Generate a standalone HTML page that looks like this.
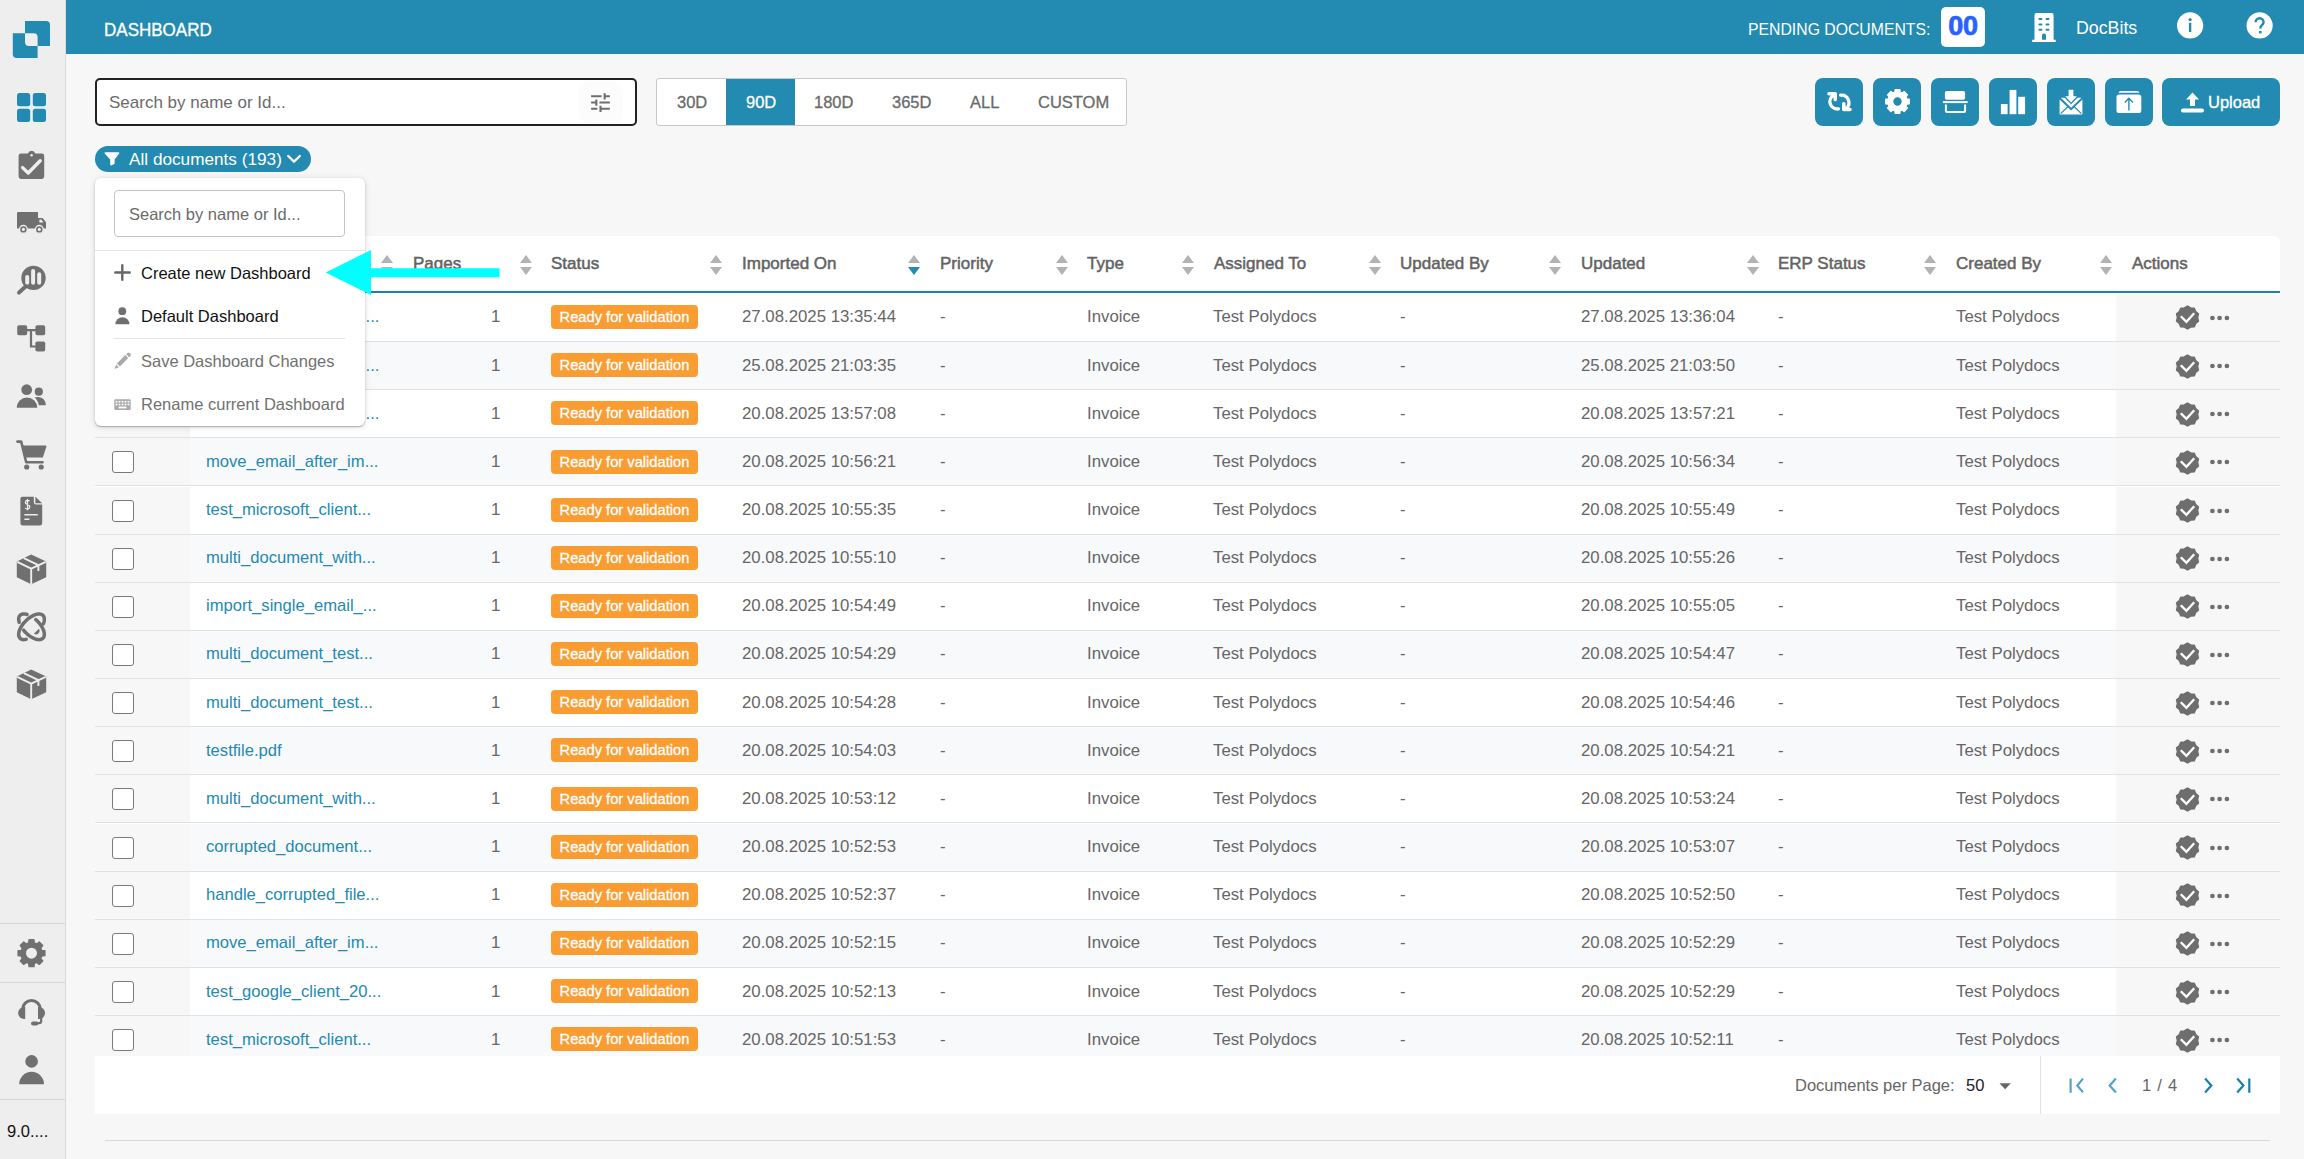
<!DOCTYPE html>
<html><head><meta charset="utf-8">
<style>
*{box-sizing:border-box;margin:0;padding:0}
html,body{width:2304px;height:1159px;overflow:hidden;background:#f7f7f7;font-family:"Liberation Sans",sans-serif;color:#666;position:relative}
.abs{position:absolute}
#side{position:absolute;left:0;top:0;width:66px;height:1159px;background:#eeeeee;border-right:1px solid #dcdcdc}
#side svg{position:absolute;fill:#707070}
#side .hr{position:absolute;left:0;width:65px;height:1px;background:#d6d6d6}
#top{position:absolute;left:66px;top:0;width:2238px;height:54px;background:#238ab1}
.med{-webkit-text-stroke:0.35px currentColor}
.search{position:absolute;left:95px;top:78px;width:542px;height:48px;border:2px solid #222;border-radius:5px;background:#fff}
.ph{position:absolute;font-size:16.5px;color:#6b6b6b;white-space:nowrap}
.seg{position:absolute;left:656px;top:78px;width:471px;height:48px;border:1px solid #c8c8c8;border-radius:3px;background:#fff}
.seg span{position:absolute;top:0;height:46px;line-height:46px;font-size:16.5px;color:#6a6a6a;-webkit-text-stroke:0.3px currentColor}
.btn{position:absolute;top:78px;width:48px;height:48px;background:#238ab1;border-radius:8px}
.btn svg{position:absolute;fill:#fff}
.pill{position:absolute;left:95px;top:146px;width:216px;height:26px;border-radius:13px;background:#238ab1}
#card{position:absolute;left:95px;top:236px;width:2185px;height:878px;background:#fff;border-radius:6px 6px 0 0}
.hdr{position:absolute;top:255.5px;font-size:17px;color:#636363;white-space:nowrap;line-height:16px;-webkit-text-stroke:0.5px #636363}
.sort{position:absolute;top:255px;width:12px;height:21px}
.sort i{position:absolute;left:0;width:0;height:0;border-left:6px solid transparent;border-right:6px solid transparent}
.sort .up{top:0;border-bottom:8px solid #b3b3b3}
.sort .dn{top:12px;border-top:8px solid #b3b3b3}
.row{position:absolute;left:95px;width:2185px;height:48px;background:#fff;border-bottom:1px solid #e2e2e2}
.row.alt{background:#f8f9fb}
.row .stk{position:absolute;top:0;height:47px;background:#f7f7f7}
.row .stk.l{left:0;width:95px}
.row .stk.r{left:2021px;width:164px}
.row .c{position:absolute;top:15.5px;font-size:16.8px;line-height:16px;white-space:nowrap;color:#666}
.row .link{color:#238ab1;font-size:16.6px;margin-left:-1px}
.cb{position:absolute;left:17px;top:13px;width:22px;height:22px;border:1.6px solid #7a7a7a;border-radius:3px;background:#fff}
.badge{position:absolute;left:456px;top:11.2px;width:147px;height:24px;border-radius:4px;background:#f99d32;color:#fff;font-size:14.7px;line-height:24.2px;text-align:center;white-space:nowrap;-webkit-text-stroke:0.3px #fff}
.vbadge{position:absolute;left:2080px;top:11.5px;width:25px;height:25px;fill:#6e6e6e}
.dots{position:absolute;left:2113px;top:12px;width:24px;height:24px;fill:#6e6e6e}
#pager{position:absolute;left:95px;top:1056px;width:2185px;height:58px;background:#fff}
#dd{position:absolute;left:95px;top:178px;width:270px;height:248px;background:#fff;border-radius:6px;box-shadow:0 1px 1.5px rgba(0,0,0,.28),0 1px 7px rgba(0,0,0,.13)}
.mi{position:absolute;left:46px;font-size:16.5px;white-space:nowrap;line-height:16px}
</style></head><body>
<svg width="0" height="0" style="position:absolute">
<defs>
<symbol id="verified" viewBox="0 0 25 25"><path d="M12.50 1.20 L15.56 3.08 L19.14 3.36 L20.51 6.68 L23.25 9.01 L22.40 12.50 L23.25 15.99 L20.51 18.32 L19.14 21.64 L15.56 21.92 L12.50 23.80 L9.44 21.92 L5.86 21.64 L4.49 18.32 L1.75 15.99 L2.60 12.50 L1.75 9.01 L4.49 6.68 L5.86 3.36 L9.44 3.08Z" stroke="#6e6e6e" stroke-width="1.8" stroke-linejoin="round"/><path d="M5.8 11.2L11.4 16.8L19.2 8.2" fill="none" stroke="#fff" stroke-width="2.3"/></symbol>
<symbol id="dots" viewBox="0 0 24 24"><circle cx="4.4" cy="12" r="2.35"/><circle cx="11.6" cy="12" r="2.35"/><circle cx="18.9" cy="12" r="2.35"/></symbol>
</defs></svg>

<div id="side">
  <svg style="left:12px;top:21px;width:38px;height:38px" viewBox="0 0 38 38"><g fill="#238ab1">
    <path d="M13 0H34A4 4 0 0 1 38 4V25H25.6V16.2A4 4 0 0 0 21.6 12.2H13Z"/>
    <path d="M0.8 12.2H13V21A4 4 0 0 0 17 25H25.6V37H4.8A4 4 0 0 1 0.8 33Z"/>
  </g></svg>
  <svg style="left:17px;top:93px;width:29px;height:29px" viewBox="0 0 29 29"><g fill="#238ab1"><rect x="0" y="0" width="13.2" height="13.2" rx="2.5"/><rect x="15.8" y="0" width="13.2" height="13.2" rx="2.5"/><rect x="0" y="15.8" width="13.2" height="13.2" rx="2.5"/><rect x="15.8" y="15.8" width="13.2" height="13.2" rx="2.5"/></g></svg>
  <!-- clipboard check -->
  <svg style="left:18px;top:150px;width:27px;height:30px" viewBox="0 0 27 30">
    <path fill-rule="evenodd" d="M3 3.4H9.9A3.9 3.9 0 0 1 17.3 3.4H23.8A2.4 2.4 0 0 1 26.2 5.8V26.6A2.4 2.4 0 0 1 23.8 29H3A2.4 2.4 0 0 1 0.6 26.6V5.8A2.4 2.4 0 0 1 3 3.4Z M13.6 4A1.3 1.3 0 1 0 13.6 6.6A1.3 1.3 0 1 0 13.6 4Z"/>
    <path d="M4.6 17.6L10.2 23L22.2 10.8" fill="none" stroke="#eeeeee" stroke-width="3.4" stroke-linecap="round" stroke-linejoin="round"/>
  </svg>
  <!-- truck -->
  <svg style="left:16px;top:211px;width:31px;height:24px" viewBox="0 0 31 24">
    <path d="M2.2 1H22V17.5H1V2.2A1.2 1.2 0 0 1 2.2 1Z"/>
    <path fill-rule="evenodd" d="M22 7H26.6L30 11.2V17.5H22Z M23.4 8.6V11.6H27.6L25.2 8.6Z"/>
    <circle cx="7.4" cy="18.4" r="3.9" stroke="#eeeeee" stroke-width="1.4"/><circle cx="7.4" cy="18.4" r="1.6" fill="#eeeeee"/>
    <circle cx="23.3" cy="18.4" r="3.9" stroke="#eeeeee" stroke-width="1.4"/><circle cx="23.3" cy="18.4" r="1.6" fill="#eeeeee"/>
  </svg>
  <!-- magnifier chart -->
  <svg style="left:16px;top:264px;width:32px;height:32px" viewBox="0 0 32 32">
    <path fill-rule="evenodd" d="M17.5 1.7A12.2 12.2 0 1 1 17.5 26.1A12.2 12.2 0 1 1 17.5 1.7Z M11.2 11A2 2 0 0 0 9.2 13V18.8A2 2 0 0 0 13.2 18.8V13A2 2 0 0 0 11.2 11Z M17.1 5A2 2 0 0 0 15.1 7V18.8A2 2 0 0 0 19.1 18.8V7A2 2 0 0 0 17.1 5Z M23.2 8.2A2 2 0 0 0 21.2 10.2V18.8A2 2 0 0 0 25.2 18.8V10.2A2 2 0 0 0 23.2 8.2Z"/>
    <path d="M3 28.6L9.8 22.3" stroke="#707070" stroke-width="4" stroke-linecap="round"/>
  </svg>
  <!-- hierarchy -->
  <svg style="left:17px;top:325px;width:29px;height:27px" viewBox="0 0 29 27">
    <rect x="0.2" y="0.2" width="10" height="10" rx="1.8"/><rect x="18.4" y="0.2" width="9.8" height="10" rx="1.8"/><rect x="18.4" y="16.5" width="9.8" height="10" rx="1.8"/>
    <path d="M10 5.2H19M14 5.2V21.5H19" fill="none" stroke="#707070" stroke-width="2.2"/>
  </svg>
  <!-- users -->
  <svg style="left:16px;top:383px;width:31px;height:26px" viewBox="0 0 31 26">
    <circle cx="10.7" cy="6.7" r="5.4"/>
    <path d="M0.7 24.8A10.3 10.3 0 0 1 21.3 24.8Z"/>
    <circle cx="22.8" cy="8.7" r="4.1"/>
    <path d="M18.5 14.6A8 8 0 0 1 29.8 22.2H22.8A12 12 0 0 0 18.5 14.6Z"/>
  </svg>
  <!-- cart -->
  <svg style="left:16px;top:440px;width:31px;height:30px" viewBox="0 0 31 30">
    <path d="M1.4 1.6H5.2L10.2 22.3H26.5" fill="none" stroke="#707070" stroke-width="2.6" stroke-linecap="round" stroke-linejoin="round"/>
    <path d="M6.8 5.6H29.6A0.9 0.9 0 0 1 30.4 6.8L26.8 17.4H9.4Z"/>
    <circle cx="10.7" cy="27" r="2.6"/><circle cx="25.2" cy="27" r="2.6"/>
  </svg>
  <!-- invoice -->
  <svg style="left:20px;top:496px;width:23px;height:30px" viewBox="0 0 23 30">
    <path fill-rule="evenodd" d="M2.4 0.7H13.8V6.2A2.4 2.4 0 0 0 16.2 8.6H22.2V27.2A2.4 2.4 0 0 1 19.8 29.6H2.8A2.4 2.4 0 0 1 0.4 27.2V2.7A2 2 0 0 1 2.4 0.7Z"/>
    <path d="M15.4 0.7L22.2 7.3H15.4Z"/>
    <path d="M4.4 18.8H17.8M4.4 23.2H9.4" stroke="#eeeeee" stroke-width="1.5"/>
    <path d="M9.6 5.1C8.6 4.1 5.4 4 5.4 6.4C5.4 8.7 9.8 8 9.8 10.8C9.8 13.2 6.6 13.2 5.1 12.2M7.5 3V14.3" fill="none" stroke="#eeeeee" stroke-width="1.3"/>
  </svg>
  <!-- box -->
  <svg style="left:16px;top:554px;width:31px;height:31px" viewBox="0 0 31 31">
    <path d="M15.2 0.6L30.2 7.6V23.2L15.2 30.2L0.8 23.2V7.6Z"/>
    <path d="M1.2 7.8L15.2 14.6V30M15.2 14.6L29.8 7.8M7.8 4.2L22.4 11.2V17" fill="none" stroke="#eeeeee" stroke-width="1.9"/>
  </svg>
  <!-- orbit -->
  <svg style="left:16px;top:611px;width:31px;height:31px" viewBox="0 0 31 31">
    <path d="M19.77 8.57 L20.81 9.52 L21.80 10.51 L22.75 11.55 L23.64 12.61 L24.47 13.70 L25.23 14.81 L25.92 15.92 L26.53 17.03 L27.06 18.14 L27.50 19.22 L27.85 20.28 L28.11 21.31 L28.27 22.29 L28.34 23.23 L28.31 24.11 L28.18 24.92 L27.96 25.67 L27.65 26.34 L27.24 26.94 L26.75 27.45 L26.17 27.87 L25.51 28.21 L24.77 28.45 L23.97 28.59 L23.10 28.64 L22.17 28.59 L21.20 28.45 L20.18 28.21 L19.13 27.87 L18.05 27.45 L16.95 26.94 L15.84 26.34 L14.72 25.67 L13.62 24.92 L12.52 24.10 L11.45 23.22 L10.41 22.29 L9.41 21.30 L8.45 20.28 L7.55 19.22 M3.17 11.39 L3.05 10.94 L2.94 10.50 L2.85 10.06 L2.77 9.64 L2.72 9.22 L2.68 8.81 L2.66 8.41 L2.66 8.02 L2.68 7.65 L2.72 7.28 L2.77 6.93 L2.84 6.58 L2.93 6.26 L3.04 5.94 L3.16 5.64 L3.30 5.35 L3.46 5.08 L3.63 4.82 L3.83 4.58 L4.04 4.35 L4.26 4.14 L4.50 3.95 L4.76 3.77 L5.03 3.61 L5.31 3.47 L5.61 3.34 L5.93 3.24 L6.26 3.15 L6.60 3.07 L6.95 3.02 L7.31 2.98 L7.69 2.96 L8.08 2.96 L8.48 2.98 L8.88 3.02 L9.30 3.07 L9.73 3.14 L10.16 3.23 L10.60 3.34 L11.05 3.46 M10.22 28.36 L9.33 28.53 L8.47 28.62 L7.66 28.64 L6.89 28.57 L6.17 28.43 L5.52 28.22 L4.92 27.93 L4.39 27.56 L3.92 27.12 L3.52 26.62 L3.20 26.05 L2.95 25.42 L2.78 24.73 L2.68 23.98 L2.66 23.19 L2.72 22.35 L2.86 21.47 L3.07 20.56 L3.36 19.62 L3.72 18.65 L4.16 17.67 L4.66 16.68 L5.23 15.68 L5.86 14.68 L6.54 13.69 L7.29 12.71 L8.08 11.75 L8.92 10.82 L9.79 9.91 L10.70 9.04 L11.65 8.21 L12.61 7.43 L13.59 6.70 L14.58 6.02 L15.58 5.41 L16.58 4.85 L17.57 4.36 L18.55 3.94 L19.51 3.60 L20.45 3.32 L21.35 3.13 L22.22 3.00 L23.05 2.96 L23.84 3.00 L24.57 3.11 L25.25 3.30 L25.87 3.56 L26.43 3.90 L26.92 4.31 L27.34 4.79 L27.69 5.34 L27.97 5.95 L28.17 6.62 L28.29 7.34 L28.34 8.12 L28.31 8.94 L28.20 9.81 L28.01 10.71 L27.75 11.64 L27.42 12.60" fill="none" stroke="#707070" stroke-width="3.5" stroke-linecap="round"/>
    <path d="M17.9 22.7L22.9 17.7A3.6 3.6 0 0 1 17.9 22.7Z"/>
  </svg>
  <!-- box 2 -->
  <svg style="left:16px;top:669px;width:31px;height:31px" viewBox="0 0 31 31">
    <path d="M15.2 0.6L30.2 7.6V23.2L15.2 30.2L0.8 23.2V7.6Z"/>
    <path d="M1.2 7.8L15.2 14.6V30M15.2 14.6L29.8 7.8M7.8 4.2L22.4 11.2V17" fill="none" stroke="#eeeeee" stroke-width="1.9"/>
  </svg>
  <div class="hr" style="top:923px"></div>
  <!-- gear -->
  <svg style="left:16px;top:938px;width:31px;height:31px" viewBox="0 0 31 31">
    <path fill-rule="evenodd" stroke="#707070" stroke-width="1.4" stroke-linejoin="round" d="M12.70 4.98 L13.06 1.82 L17.94 1.82 L18.30 4.98 L20.75 5.99 L23.23 4.01 L26.69 7.47 L24.71 9.95 L25.72 12.40 L28.88 12.76 L28.88 17.64 L25.72 18.00 L24.71 20.45 L26.69 22.93 L23.23 26.39 L20.75 24.41 L18.30 25.42 L17.94 28.58 L13.06 28.58 L12.70 25.42 L10.25 24.41 L7.77 26.39 L4.31 22.93 L6.29 20.45 L5.28 18.00 L2.12 17.64 L2.12 12.76 L5.28 12.40 L6.29 9.95 L4.31 7.47 L7.77 4.01 L10.25 5.99Z M9.30 15.20 a6.20 6.20 0 1 0 12.40 0 a6.20 6.20 0 1 0 -12.40 0Z"/>
  </svg>
  <div class="hr" style="top:982px"></div>
  <!-- headset -->
  <svg style="left:17px;top:997px;width:29px;height:30px" viewBox="0 0 29 30">
    <path d="M5.6 12.4A8.9 8.9 0 0 1 23.4 12.4" fill="none" stroke="#707070" stroke-width="3"/>
    <path d="M8.2 9.9V22H7.2A6 6 0 0 1 7.2 9.9Z"/>
    <path d="M21 9.9V22H22A6 6 0 0 0 22 9.9Z"/>
    <path d="M24.2 21V24A2.2 2.2 0 0 1 22 26.2H16" fill="none" stroke="#707070" stroke-width="2.2"/>
    <rect x="14" y="24.5" width="7.4" height="4" rx="2"/>
  </svg>
  <!-- person -->
  <svg style="left:19px;top:1055px;width:26px;height:30px" viewBox="0 0 26 30">
    <circle cx="12.6" cy="6.4" r="6.3"/>
    <path d="M0.2 29.2A12.4 12.4 0 0 1 25 29.2Z"/>
  </svg>
  <div class="hr" style="top:1099px"></div>
  <div class="abs" style="left:7px;top:1122px;font-size:16.5px;color:#111;line-height:18px">9.0....</div>
</div>

<div id="top">
  <div class="abs med" style="left:38px;top:20px;font-size:18.6px;color:#fff;line-height:20px;transform:scaleX(.915);transform-origin:0 0">DASHBOARD</div>
  <div class="abs" style="left:1682px;top:20.3px;font-size:16.2px;color:#fff;line-height:18px;transform:scaleX(.975);transform-origin:0 0">PENDING DOCUMENTS:</div>
  <div class="abs" style="left:1875px;top:7px;width:44px;height:40px;background:#fff;border-radius:5px;color:#2962ff;font-weight:bold;font-size:27px;line-height:38px;text-align:center;letter-spacing:-0.3px;-webkit-text-stroke:0.7px #2962ff">00</div>
  <div class="abs" style="left:2010px;top:19px;font-size:17.8px;color:#fff;line-height:18px">DocBits</div>
  <svg class="abs" style="left:1966px;top:12px" width="24" height="31" viewBox="0 0 24 31">
    <path fill="#fff" fill-rule="evenodd" d="M4.5 1H19.6A2 2 0 0 1 21.6 3V27.7H23.7V30H0.2V27.7H2.5V3A2 2 0 0 1 4.5 1Z M7.4 6A1 1 0 0 0 7.4 8H9.4A1 1 0 0 0 9.4 6Z M14.5 6A1 1 0 0 0 14.5 8H16.5A1 1 0 0 0 16.5 6Z M7.4 11.4A1 1 0 0 0 7.4 13.4H9.4A1 1 0 0 0 9.4 11.4Z M14.5 11.4A1 1 0 0 0 14.5 13.4H16.5A1 1 0 0 0 16.5 11.4Z M7.4 16.7A1 1 0 0 0 7.4 18.7H9.4A1 1 0 0 0 9.4 16.7Z M14.5 16.7A1 1 0 0 0 14.5 18.7H16.5A1 1 0 0 0 16.5 16.7Z M10 27.7H14V23.6A2 2 0 0 0 10 23.6Z"/>
  </svg>
  <svg class="abs" style="left:2111px;top:12px" width="27" height="27" viewBox="0 0 27 27">
    <circle cx="13.1" cy="13.4" r="13.1" fill="#fff"/>
    <circle cx="13.1" cy="7.6" r="1.6" fill="#238ab1"/>
    <rect x="11.9" y="10.8" width="2.4" height="9.2" fill="#238ab1"/>
  </svg>
  <svg class="abs" style="left:2180px;top:12px" width="27" height="27" viewBox="0 0 27 27">
    <circle cx="13.6" cy="13.4" r="13.1" fill="#fff"/>
    <path d="M9.6 10.2A4 4 0 0 1 17.6 10.2C17.6 13 14.4 13.2 14.4 15.8V16.6" fill="none" stroke="#238ab1" stroke-width="2.4"/>
    <rect x="13" y="19" width="2.6" height="2.4" fill="#238ab1"/>
  </svg>
</div>

<div class="search"><span class="ph" style="left:12px;top:12.5px;font-size:17px">Search by name or Id...</span>
  <div class="abs" style="left:482px;top:1px;width:44px;height:43px;border-radius:12px;background:#fcfcfc"></div>
  <svg class="abs" style="left:491px;top:10px" width="25" height="25" viewBox="0 0 24 24"><path fill="#6e6e6e" d="M3 17v2h6v-2H3zM3 5v2h10V5H3zm10 16v-2h8v-2h-8v-2h-2v6h2zM7 9v2H3v2h4v2h2V9H7zm14 4v-2H11v2h10zm-6-4h2V7h4V5h-4V3h-2v6z"/></svg>
</div>
<div class="seg">
  <span style="left:20px">30D</span>
  <div class="abs" style="left:69px;top:0;width:69px;height:46px;background:#238ab1"></div>
  <span style="left:89px;color:#fff">90D</span>
  <span style="left:157px">180D</span>
  <span style="left:235px">365D</span>
  <span style="left:313px">ALL</span>
  <span style="left:381px">CUSTOM</span>
</div>

<div class="btn" style="left:1815px"><svg style="left:10px;top:12px" width="28" height="24" viewBox="1825 90 28 24">
  <path d="M1838.4 108.9A7.4 7.4 0 0 1 1833.4 95.3M1840.6 95.2A7.5 7.5 0 0 1 1846 108.6" fill="none" stroke="#fff" stroke-width="3.3" stroke-linecap="round"/>
  <path d="M1829 93.7H1835.2V99.6M1843.8 103.7V109.5H1850" fill="none" stroke="#fff" stroke-width="3.6" stroke-linecap="round" stroke-linejoin="round"/>
  <path d="M1831 93.7H1835.2V97.6Z M1843.8 105.7V109.5H1848Z" fill="#fff"/>
</svg></div>
<div class="btn" style="left:1873px"><svg style="left:10.9px;top:10.4px" width="27" height="27" viewBox="0 0 31 31"><path fill="#fff" fill-rule="evenodd" stroke="#fff" stroke-width="1.6" stroke-linejoin="round" d="M12.43 4.94 L12.83 2.06 L18.17 2.06 L18.57 4.94 L20.80 5.86 L23.11 4.11 L26.89 7.89 L25.14 10.20 L26.06 12.43 L28.94 12.83 L28.94 18.17 L26.06 18.57 L25.14 20.80 L26.89 23.11 L23.11 26.89 L20.80 25.14 L18.57 26.06 L18.17 28.94 L12.83 28.94 L12.43 26.06 L10.20 25.14 L7.89 26.89 L4.11 23.11 L5.86 20.80 L4.94 18.57 L2.06 18.17 L2.06 12.83 L4.94 12.43 L5.86 10.20 L4.11 7.89 L7.89 4.11 L10.20 5.86Z M9.90 15.50 a5.60 5.60 0 1 0 11.20 0 a5.60 5.60 0 1 0 -11.20 0Z"/></svg></div>
<div class="btn" style="left:1931px"><svg style="left:11px;top:12px" width="26" height="24" viewBox="0 0 26 24">
  <rect x="2.9" y="0.9" width="20.2" height="8.8" rx="1.8" fill="#fff"/>
  <rect x="0.9" y="11.1" width="24.7" height="2" fill="#fff"/>
  <path d="M3.9 14.6V21.1A1 1 0 0 0 4.9 22.1H22.1A1 1 0 0 0 23.1 21.1V14.6" fill="none" stroke="#fff" stroke-width="2"/>
</svg></div>
<div class="btn" style="left:1989px"><svg style="left:11px;top:11px" width="26" height="26" viewBox="0 0 26 26">
  <rect x="0.9" y="15" width="6.7" height="10.2" fill="#fff"/>
  <rect x="9.6" y="0.9" width="6.8" height="24.3" fill="#fff"/>
  <rect x="18.2" y="7.8" width="6.9" height="17.4" fill="#fff"/>
</svg></div>
<div class="btn" style="left:2047px"><svg style="left:12px;top:11px" width="25" height="27" viewBox="0 0 25 27">
  <path fill="#fff" d="M0.6 10.4L12.1 21.4L23.4 10.4V25.4H0.6Z"/>
  <path d="M0.6 9.6L12.1 20.4L23.4 9.6" fill="none" stroke="#fff" stroke-width="0"/>
  <path d="M1.6 24.6L9.4 17.2M22.4 24.6L14.8 17.2" stroke="#238ab1" stroke-width="1.2"/>
  <path fill="#fff" d="M1.8 8.8H5.6L12.1 15.2L18.6 8.8H22.4L12.1 18.8Z"/>
  <path fill="#fff" d="M9.6 0.7H14.4V7.2H18L12.1 13.6L6.2 7.2H9.6Z"/>
</svg></div>
<div class="btn" style="left:2105px"><svg style="left:11px;top:13px" width="26" height="23" viewBox="0 0 26 23">
  <path fill="#fff" d="M4.7 0H21.2A3 3 0 0 1 23.5 1.8H2.4A3 3 0 0 1 4.7 0Z"/>
  <path fill="#fff" fill-rule="evenodd" d="M3.2 3.4H22.6A2.7 2.7 0 0 1 25.3 6.1V19.4A2.7 2.7 0 0 1 22.6 22.1H3.2A2.7 2.7 0 0 1 0.5 19.4V6.1A2.7 2.7 0 0 1 3.2 3.4Z"/>
  <path d="M12.9 19V7.4M9.3 10.9L12.9 7.3L16.5 10.9" fill="none" stroke="#238ab1" stroke-width="1.4" stroke-linecap="round"/>
</svg></div>
<div class="btn" style="left:2162px;width:118px">
  <svg style="left:18px;top:14px" width="25" height="22" viewBox="0 0 25 22">
    <path fill="#fff" d="M12.5 0.6L19 7.6H15V14H10V7.6H6Z"/>
    <rect x="1" y="16.6" width="23" height="3.8" rx="1.9" fill="#fff"/>
  </svg>
  <span class="abs med" style="left:46px;top:15px;color:#fff;font-size:16.5px;line-height:18px">Upload</span></div>

<div class="pill"><span class="abs" style="left:34px;top:4.5px;color:#fff;font-size:17.2px;line-height:17px">All documents (193)</span>
  <svg class="abs" style="left:9px;top:6px" width="16" height="14" viewBox="0 0 16 14"><path fill="#fff" d="M1.2 0.3H14.6A0.8 0.8 0 0 1 15.2 1.6L10.6 7.6V11.8L7.8 13.2A1 1 0 0 1 6.2 12.4V7.6L0.6 1.6A0.8 0.8 0 0 1 1.2 0.3Z"/></svg>
  <svg class="abs" style="left:191px;top:8px" width="16" height="10" viewBox="0 0 16 10"><path d="M2.2 2L8 7.6L13.8 2" fill="none" stroke="#fff" stroke-width="2.3" stroke-linecap="round" stroke-linejoin="round"/></svg>
</div>

<div id="card"></div>
<span class="hdr med" style="left:413px">Pages</span>
<span class="hdr med" style="left:551px">Status</span>
<span class="hdr med" style="left:742px">Imported On</span>
<span class="hdr med" style="left:940px">Priority</span>
<span class="hdr med" style="left:1087px">Type</span>
<span class="hdr med" style="left:1214px">Assigned To</span>
<span class="hdr med" style="left:1400px">Updated By</span>
<span class="hdr med" style="left:1581px">Updated</span>
<span class="hdr med" style="left:1778px">ERP Status</span>
<span class="hdr med" style="left:1956px">Created By</span>
<span class="hdr med" style="left:2132px">Actions</span>
<span class="sort" style="left:381px"><i class="up"></i><i class="dn"></i></span>
<span class="sort" style="left:520px"><i class="up"></i><i class="dn"></i></span>
<span class="sort" style="left:710px"><i class="up"></i><i class="dn"></i></span>
<span class="sort" style="left:908px"><i class="up"></i><i class="dn" style="border-top-color:#238ab1"></i></span>
<span class="sort" style="left:1056px"><i class="up"></i><i class="dn"></i></span>
<span class="sort" style="left:1182px"><i class="up"></i><i class="dn"></i></span>
<span class="sort" style="left:1369px"><i class="up"></i><i class="dn"></i></span>
<span class="sort" style="left:1549px"><i class="up"></i><i class="dn"></i></span>
<span class="sort" style="left:1747px"><i class="up"></i><i class="dn"></i></span>
<span class="sort" style="left:1924px"><i class="up"></i><i class="dn"></i></span>
<span class="sort" style="left:2100px"><i class="up"></i><i class="dn"></i></span>
<div class="abs" style="left:95px;top:291px;width:2185px;height:2px;background:#1f82aa"></div>

<div class="row" style="top:293.9px">
<div class="stk l"></div><div class="stk r"></div>
<i class="cb"></i>
<span class="c link" style="left:112px">handle_corrupted_file...</span>
<span class="c" style="left:396px">1</span>
<span class="badge">Ready for validation</span>
<span class="c" style="left:647px">27.08.2025 13:35:44</span>
<span class="c" style="left:845px">-</span>
<span class="c" style="left:992px">Invoice</span>
<span class="c" style="left:1118px">Test Polydocs</span>
<span class="c" style="left:1305px">-</span>
<span class="c" style="left:1486px">27.08.2025 13:36:04</span>
<span class="c" style="left:1683px">-</span>
<span class="c" style="left:1861px">Test Polydocs</span>
<svg class="vbadge" viewBox="0 0 24 24"><use href="#verified"/></svg>
<svg class="dots" viewBox="0 0 24 24"><use href="#dots"/></svg>
</div>
<div class="row alt" style="top:342.05px">
<div class="stk l"></div><div class="stk r"></div>
<i class="cb"></i>
<span class="c link" style="left:112px">handle_corrupted_file...</span>
<span class="c" style="left:396px">1</span>
<span class="badge">Ready for validation</span>
<span class="c" style="left:647px">25.08.2025 21:03:35</span>
<span class="c" style="left:845px">-</span>
<span class="c" style="left:992px">Invoice</span>
<span class="c" style="left:1118px">Test Polydocs</span>
<span class="c" style="left:1305px">-</span>
<span class="c" style="left:1486px">25.08.2025 21:03:50</span>
<span class="c" style="left:1683px">-</span>
<span class="c" style="left:1861px">Test Polydocs</span>
<svg class="vbadge" viewBox="0 0 24 24"><use href="#verified"/></svg>
<svg class="dots" viewBox="0 0 24 24"><use href="#dots"/></svg>
</div>
<div class="row" style="top:390.2px">
<div class="stk l"></div><div class="stk r"></div>
<i class="cb"></i>
<span class="c link" style="left:112px">handle_corrupted_file...</span>
<span class="c" style="left:396px">1</span>
<span class="badge">Ready for validation</span>
<span class="c" style="left:647px">20.08.2025 13:57:08</span>
<span class="c" style="left:845px">-</span>
<span class="c" style="left:992px">Invoice</span>
<span class="c" style="left:1118px">Test Polydocs</span>
<span class="c" style="left:1305px">-</span>
<span class="c" style="left:1486px">20.08.2025 13:57:21</span>
<span class="c" style="left:1683px">-</span>
<span class="c" style="left:1861px">Test Polydocs</span>
<svg class="vbadge" viewBox="0 0 24 24"><use href="#verified"/></svg>
<svg class="dots" viewBox="0 0 24 24"><use href="#dots"/></svg>
</div>
<div class="row alt" style="top:438.35px">
<div class="stk l"></div><div class="stk r"></div>
<i class="cb"></i>
<span class="c link" style="left:112px">move_email_after_im...</span>
<span class="c" style="left:396px">1</span>
<span class="badge">Ready for validation</span>
<span class="c" style="left:647px">20.08.2025 10:56:21</span>
<span class="c" style="left:845px">-</span>
<span class="c" style="left:992px">Invoice</span>
<span class="c" style="left:1118px">Test Polydocs</span>
<span class="c" style="left:1305px">-</span>
<span class="c" style="left:1486px">20.08.2025 10:56:34</span>
<span class="c" style="left:1683px">-</span>
<span class="c" style="left:1861px">Test Polydocs</span>
<svg class="vbadge" viewBox="0 0 24 24"><use href="#verified"/></svg>
<svg class="dots" viewBox="0 0 24 24"><use href="#dots"/></svg>
</div>
<div class="row" style="top:486.5px">
<div class="stk l"></div><div class="stk r"></div>
<i class="cb"></i>
<span class="c link" style="left:112px">test_microsoft_client...</span>
<span class="c" style="left:396px">1</span>
<span class="badge">Ready for validation</span>
<span class="c" style="left:647px">20.08.2025 10:55:35</span>
<span class="c" style="left:845px">-</span>
<span class="c" style="left:992px">Invoice</span>
<span class="c" style="left:1118px">Test Polydocs</span>
<span class="c" style="left:1305px">-</span>
<span class="c" style="left:1486px">20.08.2025 10:55:49</span>
<span class="c" style="left:1683px">-</span>
<span class="c" style="left:1861px">Test Polydocs</span>
<svg class="vbadge" viewBox="0 0 24 24"><use href="#verified"/></svg>
<svg class="dots" viewBox="0 0 24 24"><use href="#dots"/></svg>
</div>
<div class="row alt" style="top:534.65px">
<div class="stk l"></div><div class="stk r"></div>
<i class="cb"></i>
<span class="c link" style="left:112px">multi_document_with...</span>
<span class="c" style="left:396px">1</span>
<span class="badge">Ready for validation</span>
<span class="c" style="left:647px">20.08.2025 10:55:10</span>
<span class="c" style="left:845px">-</span>
<span class="c" style="left:992px">Invoice</span>
<span class="c" style="left:1118px">Test Polydocs</span>
<span class="c" style="left:1305px">-</span>
<span class="c" style="left:1486px">20.08.2025 10:55:26</span>
<span class="c" style="left:1683px">-</span>
<span class="c" style="left:1861px">Test Polydocs</span>
<svg class="vbadge" viewBox="0 0 24 24"><use href="#verified"/></svg>
<svg class="dots" viewBox="0 0 24 24"><use href="#dots"/></svg>
</div>
<div class="row" style="top:582.8px">
<div class="stk l"></div><div class="stk r"></div>
<i class="cb"></i>
<span class="c link" style="left:112px">import_single_email_...</span>
<span class="c" style="left:396px">1</span>
<span class="badge">Ready for validation</span>
<span class="c" style="left:647px">20.08.2025 10:54:49</span>
<span class="c" style="left:845px">-</span>
<span class="c" style="left:992px">Invoice</span>
<span class="c" style="left:1118px">Test Polydocs</span>
<span class="c" style="left:1305px">-</span>
<span class="c" style="left:1486px">20.08.2025 10:55:05</span>
<span class="c" style="left:1683px">-</span>
<span class="c" style="left:1861px">Test Polydocs</span>
<svg class="vbadge" viewBox="0 0 24 24"><use href="#verified"/></svg>
<svg class="dots" viewBox="0 0 24 24"><use href="#dots"/></svg>
</div>
<div class="row alt" style="top:630.95px">
<div class="stk l"></div><div class="stk r"></div>
<i class="cb"></i>
<span class="c link" style="left:112px">multi_document_test...</span>
<span class="c" style="left:396px">1</span>
<span class="badge">Ready for validation</span>
<span class="c" style="left:647px">20.08.2025 10:54:29</span>
<span class="c" style="left:845px">-</span>
<span class="c" style="left:992px">Invoice</span>
<span class="c" style="left:1118px">Test Polydocs</span>
<span class="c" style="left:1305px">-</span>
<span class="c" style="left:1486px">20.08.2025 10:54:47</span>
<span class="c" style="left:1683px">-</span>
<span class="c" style="left:1861px">Test Polydocs</span>
<svg class="vbadge" viewBox="0 0 24 24"><use href="#verified"/></svg>
<svg class="dots" viewBox="0 0 24 24"><use href="#dots"/></svg>
</div>
<div class="row" style="top:679.1px">
<div class="stk l"></div><div class="stk r"></div>
<i class="cb"></i>
<span class="c link" style="left:112px">multi_document_test...</span>
<span class="c" style="left:396px">1</span>
<span class="badge">Ready for validation</span>
<span class="c" style="left:647px">20.08.2025 10:54:28</span>
<span class="c" style="left:845px">-</span>
<span class="c" style="left:992px">Invoice</span>
<span class="c" style="left:1118px">Test Polydocs</span>
<span class="c" style="left:1305px">-</span>
<span class="c" style="left:1486px">20.08.2025 10:54:46</span>
<span class="c" style="left:1683px">-</span>
<span class="c" style="left:1861px">Test Polydocs</span>
<svg class="vbadge" viewBox="0 0 24 24"><use href="#verified"/></svg>
<svg class="dots" viewBox="0 0 24 24"><use href="#dots"/></svg>
</div>
<div class="row alt" style="top:727.25px">
<div class="stk l"></div><div class="stk r"></div>
<i class="cb"></i>
<span class="c link" style="left:112px">testfile.pdf</span>
<span class="c" style="left:396px">1</span>
<span class="badge">Ready for validation</span>
<span class="c" style="left:647px">20.08.2025 10:54:03</span>
<span class="c" style="left:845px">-</span>
<span class="c" style="left:992px">Invoice</span>
<span class="c" style="left:1118px">Test Polydocs</span>
<span class="c" style="left:1305px">-</span>
<span class="c" style="left:1486px">20.08.2025 10:54:21</span>
<span class="c" style="left:1683px">-</span>
<span class="c" style="left:1861px">Test Polydocs</span>
<svg class="vbadge" viewBox="0 0 24 24"><use href="#verified"/></svg>
<svg class="dots" viewBox="0 0 24 24"><use href="#dots"/></svg>
</div>
<div class="row" style="top:775.4px">
<div class="stk l"></div><div class="stk r"></div>
<i class="cb"></i>
<span class="c link" style="left:112px">multi_document_with...</span>
<span class="c" style="left:396px">1</span>
<span class="badge">Ready for validation</span>
<span class="c" style="left:647px">20.08.2025 10:53:12</span>
<span class="c" style="left:845px">-</span>
<span class="c" style="left:992px">Invoice</span>
<span class="c" style="left:1118px">Test Polydocs</span>
<span class="c" style="left:1305px">-</span>
<span class="c" style="left:1486px">20.08.2025 10:53:24</span>
<span class="c" style="left:1683px">-</span>
<span class="c" style="left:1861px">Test Polydocs</span>
<svg class="vbadge" viewBox="0 0 24 24"><use href="#verified"/></svg>
<svg class="dots" viewBox="0 0 24 24"><use href="#dots"/></svg>
</div>
<div class="row alt" style="top:823.55px">
<div class="stk l"></div><div class="stk r"></div>
<i class="cb"></i>
<span class="c link" style="left:112px">corrupted_document...</span>
<span class="c" style="left:396px">1</span>
<span class="badge">Ready for validation</span>
<span class="c" style="left:647px">20.08.2025 10:52:53</span>
<span class="c" style="left:845px">-</span>
<span class="c" style="left:992px">Invoice</span>
<span class="c" style="left:1118px">Test Polydocs</span>
<span class="c" style="left:1305px">-</span>
<span class="c" style="left:1486px">20.08.2025 10:53:07</span>
<span class="c" style="left:1683px">-</span>
<span class="c" style="left:1861px">Test Polydocs</span>
<svg class="vbadge" viewBox="0 0 24 24"><use href="#verified"/></svg>
<svg class="dots" viewBox="0 0 24 24"><use href="#dots"/></svg>
</div>
<div class="row" style="top:871.7px">
<div class="stk l"></div><div class="stk r"></div>
<i class="cb"></i>
<span class="c link" style="left:112px">handle_corrupted_file...</span>
<span class="c" style="left:396px">1</span>
<span class="badge">Ready for validation</span>
<span class="c" style="left:647px">20.08.2025 10:52:37</span>
<span class="c" style="left:845px">-</span>
<span class="c" style="left:992px">Invoice</span>
<span class="c" style="left:1118px">Test Polydocs</span>
<span class="c" style="left:1305px">-</span>
<span class="c" style="left:1486px">20.08.2025 10:52:50</span>
<span class="c" style="left:1683px">-</span>
<span class="c" style="left:1861px">Test Polydocs</span>
<svg class="vbadge" viewBox="0 0 24 24"><use href="#verified"/></svg>
<svg class="dots" viewBox="0 0 24 24"><use href="#dots"/></svg>
</div>
<div class="row alt" style="top:919.85px">
<div class="stk l"></div><div class="stk r"></div>
<i class="cb"></i>
<span class="c link" style="left:112px">move_email_after_im...</span>
<span class="c" style="left:396px">1</span>
<span class="badge">Ready for validation</span>
<span class="c" style="left:647px">20.08.2025 10:52:15</span>
<span class="c" style="left:845px">-</span>
<span class="c" style="left:992px">Invoice</span>
<span class="c" style="left:1118px">Test Polydocs</span>
<span class="c" style="left:1305px">-</span>
<span class="c" style="left:1486px">20.08.2025 10:52:29</span>
<span class="c" style="left:1683px">-</span>
<span class="c" style="left:1861px">Test Polydocs</span>
<svg class="vbadge" viewBox="0 0 24 24"><use href="#verified"/></svg>
<svg class="dots" viewBox="0 0 24 24"><use href="#dots"/></svg>
</div>
<div class="row" style="top:968.0px">
<div class="stk l"></div><div class="stk r"></div>
<i class="cb"></i>
<span class="c link" style="left:112px">test_google_client_20...</span>
<span class="c" style="left:396px">1</span>
<span class="badge">Ready for validation</span>
<span class="c" style="left:647px">20.08.2025 10:52:13</span>
<span class="c" style="left:845px">-</span>
<span class="c" style="left:992px">Invoice</span>
<span class="c" style="left:1118px">Test Polydocs</span>
<span class="c" style="left:1305px">-</span>
<span class="c" style="left:1486px">20.08.2025 10:52:29</span>
<span class="c" style="left:1683px">-</span>
<span class="c" style="left:1861px">Test Polydocs</span>
<svg class="vbadge" viewBox="0 0 24 24"><use href="#verified"/></svg>
<svg class="dots" viewBox="0 0 24 24"><use href="#dots"/></svg>
</div>
<div class="row alt" style="top:1016.15px">
<div class="stk l"></div><div class="stk r"></div>
<i class="cb"></i>
<span class="c link" style="left:112px">test_microsoft_client...</span>
<span class="c" style="left:396px">1</span>
<span class="badge">Ready for validation</span>
<span class="c" style="left:647px">20.08.2025 10:51:53</span>
<span class="c" style="left:845px">-</span>
<span class="c" style="left:992px">Invoice</span>
<span class="c" style="left:1118px">Test Polydocs</span>
<span class="c" style="left:1305px">-</span>
<span class="c" style="left:1486px">20.08.2025 10:52:11</span>
<span class="c" style="left:1683px">-</span>
<span class="c" style="left:1861px">Test Polydocs</span>
<svg class="vbadge" viewBox="0 0 24 24"><use href="#verified"/></svg>
<svg class="dots" viewBox="0 0 24 24"><use href="#dots"/></svg>
</div>

<div id="pager">
  <span class="abs" style="left:1700px;top:20px;font-size:16.5px;line-height:18px;color:#666">Documents per Page:</span>
  <span class="abs" style="left:1871px;top:20px;font-size:16.5px;line-height:18px;color:#222">50</span>
  <div class="abs" style="left:1945px;top:0;width:1px;height:58px;background:#e0e0e0"></div>
  <span class="abs" style="left:2047px;top:20px;font-size:16.5px;line-height:18px;color:#666;word-spacing:1.5px">1 / 4</span>
  <svg class="abs" style="left:1903px;top:26px" width="14" height="8" viewBox="0 0 14 8"><path d="M1.5 1.2H12.8L7.15 7.2Z" fill="#666"/></svg>
  <svg class="abs" style="left:1970px;top:20px" width="20" height="18" viewBox="0 0 20 18"><path d="M5.6 2.4V16.7M18 2.6L12.3 9.5L18 16.4" fill="none" stroke="#52a4c6" stroke-width="2.2"/></svg>
  <svg class="abs" style="left:2005px;top:20px" width="20" height="18" viewBox="0 0 14 18"><path d="M12.9 2.6L6.7 9.5L12.9 16.4" fill="none" stroke="#52a4c6" stroke-width="2.2"/></svg>
  <svg class="abs" style="left:2099.5px;top:20px" width="20" height="18" viewBox="0 0 14 18"><path d="M7.1 2.6L13.3 9.5L7.1 16.4" fill="none" stroke="#1a7fa8" stroke-width="2.2"/></svg>
  <svg class="abs" style="left:2136px;top:20px" width="20" height="18" viewBox="0 0 20 18"><path d="M6.2 2.6L12.4 9.5L6.2 16.4M18.3 2.4V16.7" fill="none" stroke="#1a7fa8" stroke-width="2.2"/></svg>
</div>
<div class="abs" style="left:105px;top:1139.5px;width:2165px;height:1px;background:#d8d8d8"></div>

<div id="dd">
  <div class="abs" style="left:19px;top:12px;width:231px;height:47px;border:1px solid #c4c4c4;border-radius:4px"><span class="ph" style="left:14px;top:14px">Search by name or Id...</span></div>
  <div class="abs" style="left:0;top:72px;width:270px;height:1px;background:#e4e4e4"></div>
  <svg class="abs" style="left:19px;top:86px" width="17" height="17" viewBox="0 0 17 17"><path d="M8.3 1.3V15.7M1.3 8.5H15.7" stroke="#666" stroke-width="2.4" stroke-linecap="round"/></svg>
  <svg class="abs" style="left:20px;top:129px" width="15" height="18" viewBox="0 0 15 18"><circle cx="7.3" cy="4.2" r="3.9" fill="#707070"/><path d="M0.4 17.2A7 7 0 0 1 14.4 17.2Z" fill="#707070"/></svg>
  <svg class="abs" style="left:19px;top:174px" width="18" height="18" viewBox="0 0 18 18"><path fill="#a9a9a9" d="M13.4 0.9A1.5 1.5 0 0 1 15.5 0.9L16.4 1.8A1.5 1.5 0 0 1 16.4 3.9L15.1 5.2L12.1 2.2Z M11.2 3.1L14.2 6.1L5.9 14.4L2.9 11.4Z M2.1 12.4L4.9 15.2L0.4 16.9Z"/></svg>
  <svg class="abs" style="left:19px;top:221px" width="17" height="12" viewBox="0 0 17 12"><rect x="0.3" y="0.3" width="16.4" height="10.6" rx="1.2" fill="#aaa"/><g fill="#fff"><rect x="1.6" y="1.9" width="1.8" height="1.6"/><rect x="4.6" y="1.9" width="1.8" height="1.6"/><rect x="7.6" y="1.9" width="1.8" height="1.6"/><rect x="10.6" y="1.9" width="1.8" height="1.6"/><rect x="13.6" y="1.9" width="1.8" height="1.6"/><rect x="1.6" y="4.7" width="1.8" height="1.6"/><rect x="4.6" y="4.7" width="1.8" height="1.6"/><rect x="7.6" y="4.7" width="1.8" height="1.6"/><rect x="10.6" y="4.7" width="1.8" height="1.6"/><rect x="13.6" y="4.7" width="1.8" height="1.6"/><rect x="4.6" y="7.6" width="7.8" height="1.8"/></g></svg>
  <span class="mi" style="top:87px;color:#111">Create new Dashboard</span>
  <span class="mi" style="top:130px;color:#111">Default Dashboard</span>
  <div class="abs" style="left:19px;top:160px;width:231px;height:1px;background:#e4e4e4"></div>
  <span class="mi" style="top:175px;color:#717171">Save Dashboard Changes</span>
  <span class="mi" style="top:218px;color:#717171">Rename current Dashboard</span>
</div>

<svg class="abs" style="left:320px;top:245px" width="185" height="55" viewBox="320 245 185 55">
  <path fill="#00ffff" d="M325.6 272.5 L371 250 L371 268.3 L499.6 268.3 L499.6 277.2 L371 277.2 L371 295 Z"/>
</svg>
</body></html>
